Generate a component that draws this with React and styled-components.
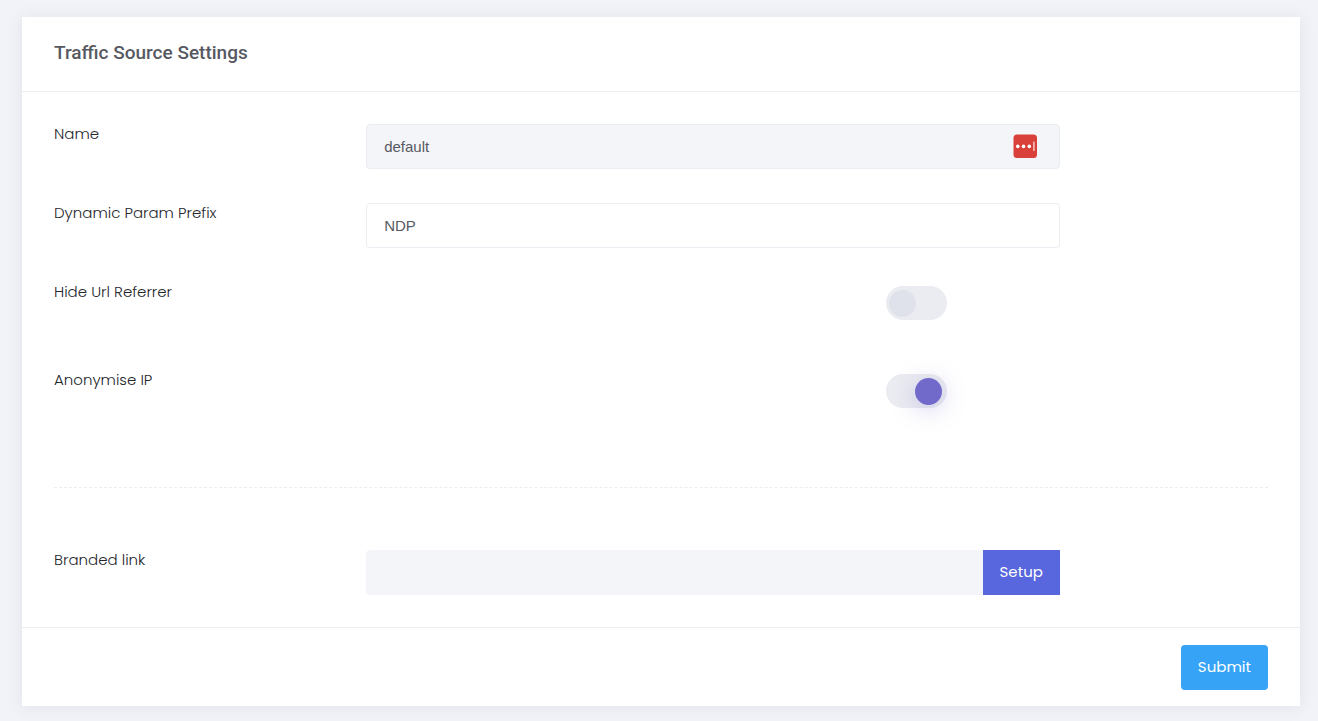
import styled, {createGlobalStyle} from 'styled-components'
import {useState} from 'react'

const App = () => {
    const [name, setName] = useState('default');
    const [prefix, setPrefix] = useState('NDP');
    const [hideReferrer, setHideReferrer] = useState(false);
    const [anonymise, setAnonymise] = useState(true);

    return (
        <>
        <GlobalStyle/>
        <Card onSubmit={(e) => e.preventDefault()}>
          <Header>
            <Title>Traffic Source Settings</Title>
          </Header>
          <Body>
            <Row>
              <Label htmlFor="name">Name</Label>
              <Field>
                <Input id="name" $filled value={name} onChange={(e) => setName(e.target.value)}/>
                <PasswordIcon/>
              </Field>
            </Row>
            <Row>
              <Label htmlFor="prefix">Dynamic Param Prefix</Label>
              <Field>
                <Input id="prefix" value={prefix} onChange={(e) => setPrefix(e.target.value)}/>
              </Field>
            </Row>
            <Row>
              <Label htmlFor="referrer">Hide Url Referrer</Label>
              <SwitchField>
                <Switch id="referrer" type="checkbox" checked={hideReferrer} onChange={() => setHideReferrer(!hideReferrer)}/>
              </SwitchField>
            </Row>
            <Row>
              <Label htmlFor="anonymise">Anonymise IP</Label>
              <SwitchField>
                <Switch id="anonymise" type="checkbox" checked={anonymise} onChange={() => setAnonymise(!anonymise)}/>
              </SwitchField>
            </Row>
            <Separator/>
            <Row>
              <Label htmlFor="branded">Branded link</Label>
              <InputGroup>
                <Input id="branded" $filled $plain readOnly/>
                <SetupButton type="button">Setup</SetupButton>
              </InputGroup>
            </Row>
          </Body>
          <Footer>
            <SubmitButton type="submit">Submit</SubmitButton>
          </Footer>
        </Card>
        </>
    )
}

const PasswordIcon = () => {
  return(
      <IconSvg viewBox="0 0 24 24" aria-hidden="true">
        <rect x=".5" y=".6" width="23.5" height="23.4" rx="3.5" fill="#d9403a"/>
        <circle cx="4.8" cy="12.4" r="1.8" fill="#fff"/>
        <circle cx="10.5" cy="12.4" r="1.8" fill="#fff"/>
        <circle cx="16.3" cy="12.4" r="1.8" fill="#fff"/>
        <rect x="20" y="7.5" width="1.8" height="9.5" rx=".4" fill="#f0b3b0"/>
      </IconSvg>
  )
}

const GlobalStyle = createGlobalStyle`
* {
  box-sizing: border-box;
}

body {
  margin: 0;
  background-color: #f2f3f8;
  font-family: Poppins, Inter, sans-serif;
  font-size: 15px;
}
`;

const Card = styled.form`
margin: 17px 18px 15px 22px;
background-color: #fff;
box-shadow: 0 1px 15px 1px rgba(69, 65, 78, .08);
`;

const Header = styled.header`
display: flex;
align-items: center;
height: 75px;
padding: 0 32px 4px;
border-bottom: 1px solid #ebedf2;
`;

const Title = styled.h3`
margin: 0;
color: #575962;
font-family: Roboto, sans-serif;
font-size: 19px;
font-weight: 500;
`;

const Body = styled.div`
display: flex;
flex-direction: column;
gap: 34px;
padding: 32px;
`;

const Row = styled.div`
display: grid;
grid-template-columns: 9fr 20fr 6fr;
align-items: start;
`;

const Label = styled.label`
justify-self: start;
color: #26272d;
font-weight: 300;
line-height: 20px;
`;

const Field = styled.div`
position: relative;
display: flex;
`;

const InputGroup = styled.div`
display: flex;
`;

const SwitchField = styled.div`
display: flex;
padding: 4px 0 16px 75%;
`;

const Input = styled.input`
flex: 1;
min-width: 0;
height: 45px;
padding: 0 17px;
border: 1px solid ${props => props.$plain ? '#f4f5f8' : '#ebedf2'};
border-radius: ${props => props.$plain ? '4px 0 0 4px' : '4px'};
background-color: ${props => props.$filled ? '#f4f5f8' : '#fff'};
color: #575962;
font-family: "Liberation Sans", Arial, sans-serif;
font-size: 15px;
outline: none;

&:focus{
  border-color: #716aca;
}
`;

const IconSvg = styled.svg`
position: absolute;
top: 10px;
right: 23px;
width: 24px;
height: 24px;
`;

const Switch = styled.input`
appearance: none;
flex: none;
display: flex;
align-items: center;
width: 61px;
height: 34px;
margin: 0;
padding: 0 3px;
border-radius: 17px;
background-color: #ebecf1;
cursor: pointer;

&::after{
  content: "";
  width: 27px;
  height: 27px;
  border-radius: 50%;
  background-color: #dfe2ea;
}

&:checked{
  justify-content: flex-end;
  padding-right: 5px;
}

&:checked::after{
  background-color: #716aca;
  box-shadow: 0 4px 24px rgba(113, 106, 202, .35);
}
`;

const Separator = styled.hr`
width: 100%;
margin: 29px 0 28px;
border: 0;
border-top: 1px dashed #ebedf2;
`;

const Button = styled.button`
height: 45px;
padding: 0 17px 2px;
border: none;
color: #fff;
font-family: inherit;
font-size: 15px;
font-weight: 400;
cursor: pointer;
`;

const SetupButton = styled(Button)`
background-color: #5867dd;
`;

const SubmitButton = styled(Button)`
border-radius: 4px;
background-color: #36a3f7;
`;

const Footer = styled.footer`
display: flex;
justify-content: flex-end;
padding: 17px 32px 16px;
border-top: 1px solid #ebedf2;
`;

export default App;
